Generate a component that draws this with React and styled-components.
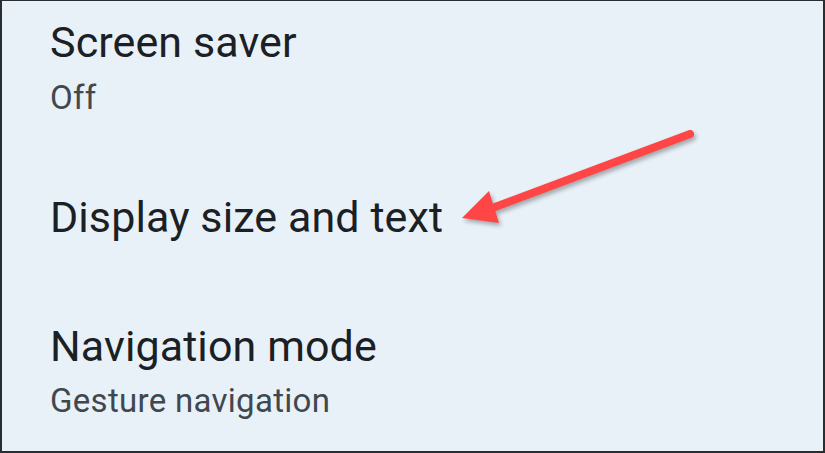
import React from "react";
import styled, { createGlobalStyle } from "styled-components";

const GlobalStyle = createGlobalStyle`
  html, body {
    margin: 0;
    padding: 0;
  }
  body {
    font-family: Roboto, "Noto Sans", sans-serif;
  }
`;

const Screen = styled.div`
  position: relative;
  width: 825px;
  height: 453px;
  box-sizing: border-box;
  background-color: #e9f1f8;
  border: 2px solid #2a2d30;
  border-top-width: 1px;
  overflow: hidden;
`;

const List = styled.div`
  display: flex;
  flex-direction: column;
  padding-left: 48px;
`;

const Item = styled.div`
  display: flex;
  flex-direction: column;
  padding-top: ${(p) => p.$top}px;
`;

const Title = styled.div`
  font-size: 43px;
  line-height: 52px;
  color: #1b2024;
  letter-spacing: 0.1px;
`;

const Summary = styled.div`
  font-size: 33px;
  line-height: 50px;
  margin-top: ${(p) => p.$gap}px;
  color: #40484e;
  letter-spacing: 0.3px;
`;

const Arrow = styled.svg`
  position: absolute;
  left: 0;
  top: 0;
  filter: drop-shadow(2px 3px 2px rgba(0, 0, 0, 0.3));
`;

export default function App() {
  return (
    <>
      <GlobalStyle />
      <Screen>
        <List>
          <Item $top={15}>
            <Title>Screen saver</Title>
            <Summary $gap={5}>Off</Summary>
          </Item>
          <Item $top={68}>
            <Title>Display size and text</Title>
          </Item>
          <Item $top={77}>
            <Title>Navigation mode</Title>
            <Summary $gap={4}>Gesture navigation</Summary>
          </Item>
        </List>
        <Arrow width="825" height="453" viewBox="0 0 825 453">
          <line x1="688" y1="133" x2="485" y2="209" stroke="#ff4646" strokeWidth="8" strokeLinecap="round" />
          <polygon points="460,217 487,190 497,222" fill="#ff4646" />
        </Arrow>
      </Screen>
    </>
  );
}
